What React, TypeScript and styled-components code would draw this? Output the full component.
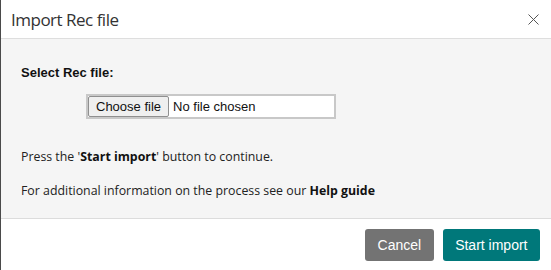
import React from 'react'
import styled, {createGlobalStyle} from 'styled-components'

const GlobalStyle = createGlobalStyle`
  html, body {
    margin: 0;
    padding: 0;
    background: #ffffff;
  }
`

export default function App() {
  return (
    <>
      <GlobalStyle />
      <Dialog>
        <Header>
          <Title>Import Rec file</Title>
          <CloseButton aria-label="Close">
            <svg width="11" height="11" viewBox="0 0 11 11">
              <path d="M0.5 0.5 L10.5 10.5 M10.5 0.5 L0.5 10.5" stroke="#555" strokeWidth="1" fill="none" />
            </svg>
          </CloseButton>
        </Header>
        <Body>
          <FieldLabel>Select Rec file:</FieldLabel>
          <FileRow>
            <FilePicker>
              <HiddenInput type="file" />
              <PickButton>Choose file</PickButton>
              <FileName>No file chosen</FileName>
            </FilePicker>
          </FileRow>
          <Paragraph>
            Press the '<b>Start import</b>' button to continue.
          </Paragraph>
          <Paragraph>
            For additional information on the process see our <b>Help guide</b>
          </Paragraph>
        </Body>
        <Footer>
          <ActionButton variant="secondary">Cancel</ActionButton>
          <ActionButton variant="primary">Start import</ActionButton>
        </Footer>
      </Dialog>
    </>
  )
}

const Dialog = styled.div`
  width: 551px;
  height: 270px;
  box-sizing: border-box;
  border-left: 1px solid #4a4a4a;
  display: flex;
  flex-direction: column;
  background: #ffffff;
`

const Header = styled.div`
  height: 38px;
  border-bottom: 1px solid #dedede;
  display: flex;
  align-items: center;
  justify-content: space-between;
  padding: 0 12px 0 10px;
`

const Title = styled.h1`
  margin: 0;
  font-family: 'Open Sans', 'Noto Sans', sans-serif;
  font-weight: 400;
  font-size: 17px;
  letter-spacing: -0.5px;
  color: #333333;
`

const CloseButton = styled.button`
  border: none;
  background: none;
  padding: 0;
  display: flex;
  cursor: pointer;
`

const Body = styled.div`
  height: 179px;
  background: #f5f5f5;
  border-bottom: 1px solid #dcdcdc;
  padding: 0 20px;
  display: flex;
  flex-direction: column;
`

const FieldLabel = styled.div`
  margin-top: 26px;
  font-family: 'Liberation Sans', Arial, sans-serif;
  font-weight: 700;
  font-size: 13px;
  color: #111111;
`

const FileRow = styled.div`
  margin-top: 14px;
  padding-left: 65px;
`

const FilePicker = styled.label`
  box-sizing: border-box;
  width: 250px;
  height: 25px;
  border: 2px solid #c8c8c8;
  background: #ffffff;
  display: flex;
  align-items: center;
  font-family: 'Liberation Sans', Arial, sans-serif;
  font-size: 13px;
  color: #111111;
  cursor: pointer;
`

const HiddenInput = styled.input`
  display: none;
`

const PickButton = styled.span`
  box-sizing: border-box;
  height: 21px;
  display: flex;
  align-items: center;
  padding: 0 7px;
  margin-right: 4px;
  border: 1px solid #8f8f8f;
  border-radius: 2px;
  background: #efefef;
`

const FileName = styled.span`
  white-space: nowrap;
`

const Paragraph = styled.p`
  margin: 0;
  font-family: 'Open Sans', 'Noto Sans', sans-serif;
  font-size: 12.35px;
  color: #222222;

  &:first-of-type {
    margin-top: 29px;
  }

  & + & {
    margin-top: 17px;
  }

  b {
    font-weight: 700;
    color: #111111;
  }
`

const Footer = styled.div`
  flex: 1;
  display: flex;
  justify-content: flex-end;
  align-items: center;
  gap: 9px;
  padding-right: 11px;
`

const ActionButton = styled.button<{variant: 'primary' | 'secondary'}>`
  height: 32px;
  padding: 0 12.5px;
  border: none;
  border-radius: 3px;
  background: ${props => (props.variant === 'primary' ? '#00787a' : '#737373')};
  color: #ffffff;
  font-family: 'Liberation Sans', Arial, sans-serif;
  font-size: 14px;
  cursor: pointer;
`
